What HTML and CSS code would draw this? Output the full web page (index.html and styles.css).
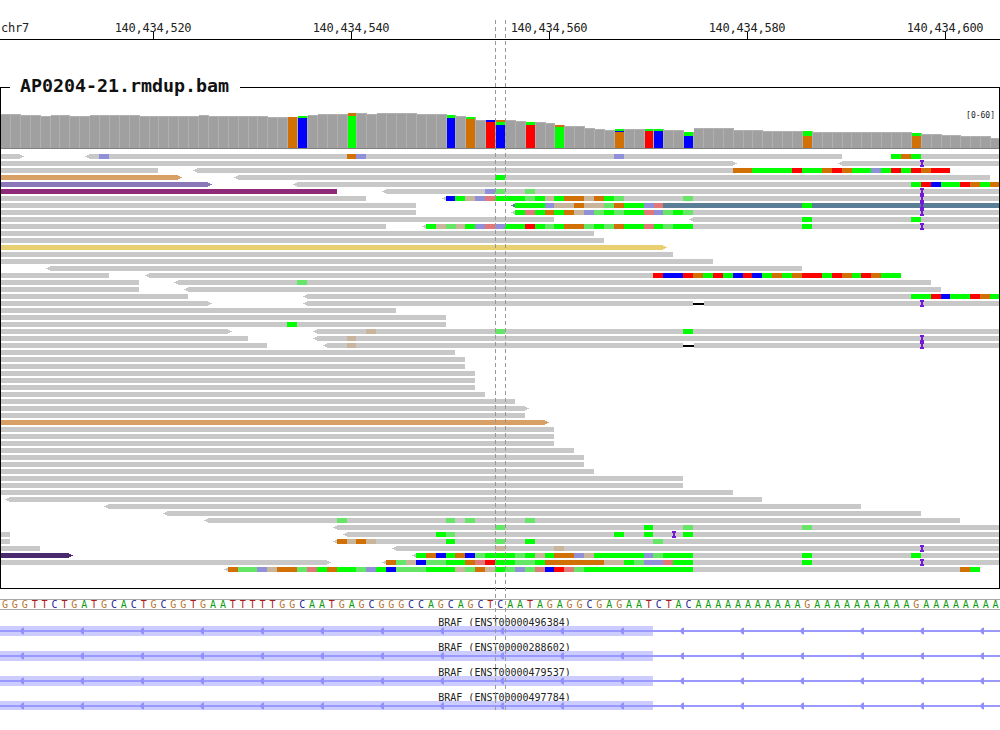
FILE: index.html
```html
<!DOCTYPE html>
<html lang="en">
<head>
  <meta charset="UTF-8" />
  <title>IGV - chr7 BRAF</title>
  <link rel="stylesheet" href="styles.css">
</head>
<body>

  <div class="page">
    <div class="ruler">
      <div class="chrom">chr7</div>
      <div class="tick">140,434,520</div>
      <div class="tick">140,434,540</div>
      <div class="tick">140,434,560</div>
      <div class="tick">140,434,580</div>
      <div class="tick">140,434,600</div>
    </div>

    <div class="track">
      <div class="track-name">AP0204-21.rmdup.bam</div>
      <svg id="pileup" class="pileup" viewBox="1 88 998 500" width="998" height="500">
        <text class="range" x="995" y="118" text-anchor="end">[0-60]</text>
      </svg>
    </div>

    <div class="sequence" id="sequence"></div>

    <div class="genes">
      <div class="gene">
        <div class="gene-name">BRAF (ENST00000496384)</div>
        <svg class="gene-model" width="1000" height="10"></svg>
      </div>
      <div class="gene">
        <div class="gene-name">BRAF (ENST00000288602)</div>
        <svg class="gene-model" width="1000" height="10"></svg>
      </div>
      <div class="gene">
        <div class="gene-name">BRAF (ENST00000479537)</div>
        <svg class="gene-model" width="1000" height="10"></svg>
      </div>
      <div class="gene">
        <div class="gene-name">BRAF (ENST00000497784)</div>
        <svg class="gene-model gene-last" width="1000" height="9"></svg>
      </div>
    </div>

    <div class="center-line first"></div>
    <div class="center-line second"></div>
  </div>

  <script src="pileup.js"></script>
</body>
</html>
```

FILE: styles.css
```css
html, body {
  margin: 0;
  background-color: white;
}
.page {
  position: relative;
  width: 1000px;
  height: 730px;
  overflow: hidden;
}

/* ruler */
.ruler {
  display: flex;
  align-items: flex-start;
  height: 18px;
  padding-top: 21px;
  border-bottom: 1px solid black;
  font-family: "DejaVu Sans Mono", monospace;
  font-size: 12px;
  letter-spacing: -0.25px;
  line-height: 14px;
  color: #222;
}
.chrom {
  flex: 0 0 53px;
  padding-left: 1px;
}
.tick {
  flex: 0 0 198px;
  position: relative;
  text-align: center;
}
.tick::after {
  content: "";
  position: absolute;
  left: 99px;
  top: 11px;
  width: 1px;
  height: 7px;
  background-color: black;
}

/* alignment track */
.track {
  position: relative;
  margin-top: 47px;
  border: 1px solid black;
  width: 998px;
  height: 500px;
}
.track-name {
  position: absolute;
  left: 9px;
  top: -13px;
  padding: 0 11px 0 10px;
  background-color: white;
  font-family: "DejaVu Sans Mono", monospace;
  font-weight: bold;
  font-size: 18.3px;
  line-height: 22px;
  color: #111;
}
.pileup {
  display: block;
}
.range {
  font-family: "DejaVu Sans Mono", monospace;
  font-size: 8px;
  fill: #222;
}

/* reference sequence */
.sequence {
  display: flex;
  margin-top: 10px;
  height: 9px;
  border-top: 1px solid #aaa;
  border-bottom: 1px solid #aaa;
  font-family: "DejaVu Sans Mono", monospace;
  font-size: 10px;
  line-height: 10px;
}
.base {
  flex: 0 0 9.92px;
  text-align: center;
}
.base-A { color: #0a9b0a; }
.base-C { color: #24248f; }
.base-G { color: #b5752f; }
.base-T { color: #b01c1c; }

/* gene tracks */
.genes {
  padding-top: 1px;
}
.gene-name {
  height: 15px;
  padding-left: 9px;
  text-align: center;
  font-family: "DejaVu Sans Mono", monospace;
  font-size: 10px;
  line-height: 24px;
  color: #222;
}
.gene-model {
  display: block;
}

/* the two dashed lines around the centre base */
.center-line {
  position: absolute;
  top: 20px;
  width: 1px;
  height: 690px;
  background-image: repeating-linear-gradient(to bottom, #999 0, #999 4px, transparent 4px, transparent 7px);
}
.center-line.first {
  left: 495px;
}
.center-line.second {
  left: 505px;
}
```

FILE: pileup.js
```js
const SVG_NS = 'http://www.w3.org/2000/svg';

const COLORS = {
  g: '#00ff00', l: '#66e666', o: '#d17105', t: '#c9b59b',
  b: '#0000ff', p: '#9090d8', r: '#ff0000', s: '#e07878'
};
const GREY = '#c8c8c8';
const TAN = '#d9a066';
const LILAC = '#8c78b8';
const PLUM = '#8f2a7a';
const SLATE = '#5a7e96';
const SAND = '#e8d070';
const GRAPE = '#4a2a6e';

const seq = 'GGGTTCTGATGCACTGCGGTGAATTTTTGGCAATGAGCGGGCCAGCAGCTCAATAGAGGCGAGAATCTAC' +
  'AAAAAAAAAAAGAAAAAAAAAAGAAAAAAAA';

// coverage: top of the bar for each base
const tops = [
  114,114,115,115,116,115,115,116,116,115, 115,115,115,115,116,116,116,116,116,116,
  115,116,116,116,116,116,116,117,117,117, 116,115,114,114,114,113,113,114,113,113,
  113,113,114,114,114,115,116,117,120,120, 120,120,121,122,122,123,125,126,126,128,
  129,130,129,129,129,129,129,130,130,132, 128,128,128,128,130,130,130,131,131,131,
  131,131,132,132,132,132,132,132,132,132, 132,132,133,134,134,135,135,136,136,136,
  138
];
// coloured stacks on the coverage, as [top, colour] from the top down
const stacks = {
  29: [[117, 'o']],
  30: [[116, 'g'], [118, 'b']],
  35: [[113, 'o'], [116, 'g']],
  45: [[115, 'g'], [118, 'b']],
  47: [[117, 'g'], [119, 'o']],
  49: [[120, 'b'], [122, 'r']],
  50: [[120, 'o'], [122, 'g'], [125, 'b']],
  53: [[122, 'g'], [125, 'r']],
  56: [[125, 'o'], [127, 'g']],
  62: [[129, 'g'], [131, 'b'], [132, 'o']],
  65: [[129, 'g'], [131, 'r']],
  66: [[129, 'g'], [131, 'b']],
  69: [[132, 'g'], [136, 'b']],
  81: [[131, 'g'], [136, 'o']],
  92: [[133, 'g'], [136, 'o']]
};

// reads per row: [start, end, strand, marks, colour]
// marks: letter + x starts that colour at x, '.' goes back to the read colour
const rows = [
  [[1, 20, '>'], [89, 842, '<', 'p99 .109 o347 p356 .366 p614 .624'], [891, 999, 0, 'g891 o901 g911 .921']],
  [[1, 733, '>'], [842, 999, '<']],
  [[1, 158, 0], [197, 950, '<', 'o733 g752 r792 g802 o822 r832 o842 g852 p871 g881 r891 g901 r911 o921 r931 .950']],
  [[1, 178, '>', '', TAN], [238, 990, '<', 'g495 .505']],
  [[1, 208, '>', '', LILAC], [297, 999, '<', 'g911 r921 b931 g941 r960 o970 g980 o990 .999']],
  [[1, 337, 0, '', PLUM], [386, 999, '<', 'p485 l495 .505 l525 .535']],
  [[1, 366, 0], [446, 999, '<', 'b446 g455 t465 p475 s485 g495 l525 g535 t545 g554 o564 t584 o594 g604 l614 .624 l683 .693']],
  [[1, 416, 0], [515, 999, '<', 'g515 p545 t554 o574 t584 l604 o614 g624 p644 s654 .663 g802 .812', SLATE]],
  [[1, 416, 0], [515, 999, '<', 'g515 s525 g535 o545 g554 o564 t574 p584 l594 g604 l614 g624 s644 p654 l663 g673 l683 .693']],
  [[1, 554, 0], [693, 999, '<', 'g802 .812 g911 .921']],
  [[1, 386, 0], [426, 999, '<', 'g426 t436 l446 t456 g465 p475 s485 p495 g505 r525 g535 l545 g554 o564 l584 g594 l604 o614 g624 s644 g654 l663 g673 .693 g802 .812']],
  [[1, 594, 0]],
  [[1, 604, 0]],
  [[1, 663, '>', '', SAND]],
  [[1, 673, 0]],
  [[1, 713, 0]],
  [[50, 802, '<']],
  [[1, 109, 0], [149, 901, '<', 'r653 b663 r683 o693 g703 r713 g723 b733 r743 b752 g762 o772 g782 o792 r802 g822 r832 o842 g852 r861 o871 g881 .901']],
  [[1, 139, 0], [178, 931, '<', 'l297 .307']],
  [[1, 139, 0], [188, 941, '<']],
  [[1, 188, 0], [307, 999, '<', 'g911 r931 b941 g950 r970 o980 g990 .999']],
  [[1, 208, '>'], [307, 693, '<'], [704, 999, 0]],
  [[1, 396, 0]],
  [[1, 446, 0]],
  [[1, 446, 0, 'g287 .297']],
  [[1, 228, '>'], [317, 999, '<', 't366 .376 l495 .505 g683 .693']],
  [[1, 248, 0], [317, 999, '<', 't347 .356']],
  [[1, 267, 0], [327, 683, '<', 't347 .356'], [694, 999, 0]],
  [[1, 455, 0]],
  [[1, 465, 0]],
  [[1, 465, 0]],
  [[1, 475, 0]],
  [[1, 475, 0]],
  [[1, 475, 0]],
  [[1, 485, 0]],
  [[1, 515, 0]],
  [[1, 525, '>']],
  [[1, 525, 0]],
  [[1, 545, '>', '', TAN]],
  [[1, 554, 0]],
  [[1, 554, 0]],
  [[1, 554, 0]],
  [[1, 574, 0]],
  [[1, 584, 0]],
  [[1, 584, 0]],
  [[1, 594, 0]],
  [[1, 683, 0]],
  [[1, 683, 0]],
  [[1, 733, 0]],
  [[9, 762, '<']],
  [[108, 861, '<']],
  [[167, 921, '<']],
  [[208, 960, '<', 'l337 .347 l446 .455 l465 .475 l525 .535']],
  [[337, 999, '<', 'l495 .505 g644 .653 l683 .693 l802 .812']],
  [[1, 10, 0], [347, 999, '<', 'g436 l446 .455 g614 .624 g644 .653 g683 .693']],
  [[1, 10, 0], [337, 999, '<', 'o337 t347 o356 t366 .376 g446 .455 l495 .505 g525 .535 l653 .663']],
  [[1, 40, 0], [396, 999, '<', 't495 .505 t554 .564']],
  [[1, 69, '>', '', GRAPE], [416, 999, '<', 'g416 o426 b436 g446 o455 b465 l475 g485 l515 g525 t535 g545 o554 p574 t584 g594 p644 l653 g663 .693 g802 .812 g911 .921']],
  [[1, 327, '>'], [386, 999, '<', 'o386 l396 t406 b416 l426 g446 o465 s475 r485 g495 l515 g535 o545 t604 g624 l634 p644 s663 g673 .693 g802 .812']],
  [[228, 980, '<', 'o228 l238 p257 t267 o277 l297 s307 g317 o327 g337 l356 p366 g376 b386 l396 g426 t455 l465 o475 t485 g495 l505 p515 l525 s535 b545 r554 s564 l574 g584 .693 o960 g970 .980']]
];

// deletions [row, from, to] and insertions [row, x]
const deletions = [[21, 693, 704], [27, 683, 694]];
const insertions = [
  [1, 920], [5, 920], [6, 920], [7, 920], [8, 920], [10, 920], [21, 920], [26, 920], [27, 920],
  [54, 672], [56, 920], [58, 920]
];

function rect(parent, x, y, w, h, fill) {
  const r = document.createElementNS(SVG_NS, 'rect');
  r.setAttribute('x', x);
  r.setAttribute('y', y);
  r.setAttribute('width', w);
  r.setAttribute('height', h);
  r.setAttribute('fill', fill);
  parent.appendChild(r);
}

function drawCoverage(svg) {
  tops.forEach((top, n) => {
    const x = Math.round(1 + n * 9.9);
    const w = Math.round(1 + (n + 1) * 9.9) - x;
    const stack = stacks[n];
    rect(svg, x, top, w, 148 - top, '#b0b0b0');
    if (stack) {
      stack.forEach((part, i) => {
        const next = i + 1 < stack.length ? stack[i + 1][0] : 148;
        rect(svg, x, part[0], w - 1, next - part[0], COLORS[part[1]]);
      });
    } else {
      rect(svg, x, top + 1, w - 1, 147 - top, '#a0a0a0');
    }
  });
  rect(svg, 1, 148, 998, 1, '#808080');
}

function drawRead(svg, read, y) {
  const [start, end, strand, marks, color] = read;
  const fill = color || GREY;
  rect(svg, start, y, end - start, 5, fill);
  if (strand === '>') {
    rect(svg, end, y + 1, 2, 3, fill);
    rect(svg, end + 2, y + 2, 2, 1, fill);
  } else if (strand === '<') {
    rect(svg, start - 2, y + 1, 2, 3, fill);
    rect(svg, start - 4, y + 2, 2, 1, fill);
  }
  if (marks) {
    const parts = marks.split(' ').map(m => [m[0], Number(m.slice(1))]);
    parts.forEach((part, i) => {
      if (part[0] !== '.' && parts[i + 1]) {
        rect(svg, part[1], y, parts[i + 1][1] - part[1], 5, COLORS[part[0]]);
      }
    });
  }
}

function drawInsertion(svg, x, y) {
  rect(svg, x, y - 1, 4, 2, '#7518d8');
  rect(svg, x + 1, y + 1, 2, 3, '#7518d8');
  rect(svg, x, y + 4, 4, 2, '#7518d8');
}

const pileup = document.getElementById('pileup');
const range = pileup.querySelector('.range');
const layer = document.createElementNS(SVG_NS, 'g');
pileup.insertBefore(layer, range);

drawCoverage(layer);
rows.forEach((reads, i) => {
  reads.forEach(read => drawRead(layer, read, 154 + i * 7));
});
deletions.forEach(d => rect(layer, d[1], 154 + d[0] * 7 + 2, d[2] - d[1], 2, 'black'));
insertions.forEach(ins => drawInsertion(layer, ins[1], 154 + ins[0] * 7));

// reference sequence letters
const seqBox = document.getElementById('sequence');
seq.split('').forEach(letter => {
  const span = document.createElement('span');
  span.className = 'base base-' + letter;
  span.textContent = letter;
  seqBox.appendChild(span);
});

// gene models: exon band, intron line and strand arrows
document.querySelectorAll('.gene-model').forEach(svg => {
  const h = Number(svg.getAttribute('height'));
  rect(svg, 0, 0, 653, h, '#ccccff');
  rect(svg, 0, 4, 1000, 2, '#9999ff');
  for (let x = 22.5; x < 1000; x += 60) {
    const arrow = document.createElementNS(SVG_NS, 'polygon');
    arrow.setAttribute('points', `${x - 2.5},5 ${x - 0.5},2 ${x + 1.5},1.5 ${x + 1.5},8.5 ${x - 0.5},8`);
    arrow.setAttribute('fill', '#9090ff');
    svg.appendChild(arrow);
  }
});
```
